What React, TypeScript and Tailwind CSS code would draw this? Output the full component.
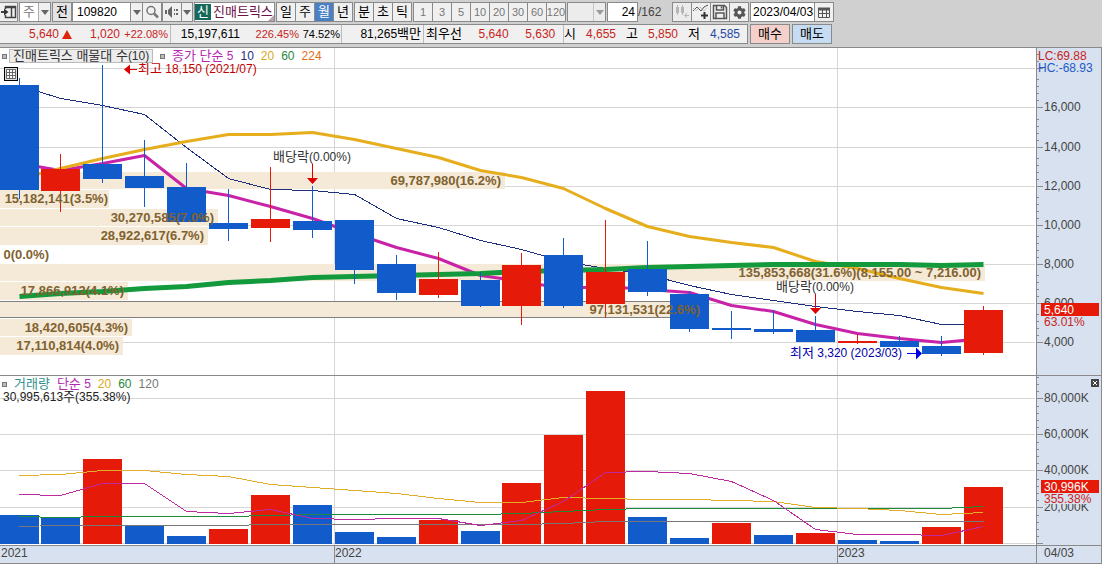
import { FaCog, FaSearch } from "react-icons/fa";

const UP = "#e61a09";
const DOWN = "#115bca";

// top, bottom, high, low, volume top, price up, volume up
const candles: [number, number, number, number, number, boolean, boolean][] = [
  [85, 190, 78, 199, 515, false, false],
  [169, 191, 154, 212, 517, true, false],
  [164, 179, 65, 183, 459, false, true],
  [176, 188, 140, 207, 526, false, false],
  [187, 222, 163, 222, 536, false, false],
  [223, 229, 189, 241, 529, false, true],
  [219, 228, 167, 242, 495, true, true],
  [221, 230, 186, 238, 505, false, false],
  [220, 270, 220, 284, 532, false, false],
  [264, 293, 255, 300, 537, false, false],
  [279, 295, 252, 298, 520, true, true],
  [280, 306, 272, 307, 531, false, false],
  [265, 306, 253, 325, 483, true, true],
  [255, 306, 238, 308, 435, false, true],
  [272, 304, 220, 318, 391, true, true],
  [269, 292, 241, 296, 517, false, false],
  [294, 329, 291, 332, 538, false, false],
  [328, 330, 311, 339, 523, false, true],
  [329, 332, 310, 334, 535, false, false],
  [330, 342, 316, 342, 533, false, true],
  [341, 343, 334, 344, 540, true, false],
  [341, 347, 336, 347, 541, false, false],
  [346, 354, 336, 356, 527, false, true],
  [310, 353, 306, 355, 487, true, true],
];

const barX = (i: number) => (i === 0 ? 0 : i < 12 ? 42 * i - 1 : 42 * i - 2);

const toPoints = (values: number[]) =>
  values.map((y, i) => `${barX(i) + 19.5},${y + 0.5}`).join(" ");

const ma5 = [163, 170, 163, 155, 188, 195, 206, 218, 233, 247, 258, 275, 281, 288, 286, 289, 292, 305, 311, 324, 333, 338, 342, 338];
const ma10 = [85, 98, 105, 114, 147, 178, 189, 190, 194, 218, 227, 240, 249, 261, 268, 274, 285, 294, 300, 306, 311, 315, 324, 324];
const ma20 = [178, 168, 158, 149, 141, 134, 134, 132, 139, 148, 157, 170, 177, 188, 208, 226, 236, 242, 247, 261, 268, 278, 287, 293];
const ma60 = [296, 293, 291, 288, 286, 282, 280, 277, 276, 275, 274, 273, 271, 270, 269, 267, 266, 265, 264, 264, 264, 264, 265, 264];

const vol5 = [494, 495, 483, 483, 511, 513, 509, 518, 519, 518, 518, 525, 520, 501, 472, 471, 473, 481, 500, 529, 534, 534, 535, 526];
const vol20 = [475, 474, 470, 470, 474, 476, 484, 487, 490, 493, 498, 502, 502, 497, 498, 499, 499, 500, 501, 507, 508, 510, 514, 512];
const vol60 = [516, 517, 516, 516, 516, 516, 515, 514, 514, 514, 514, 514, 513, 511, 509, 508, 508, 508, 508, 508, 508, 508, 508, 506];
const vol120 = [526, 525, 525, 525, 525, 525, 524, 524, 524, 524, 524, 524, 524, 523, 521, 521, 521, 521, 521, 521, 521, 521, 521, 521];

const bands = [
  [172, 17, 505],
  [190, 18, 109],
  [209, 17, 218],
  [227, 18, 208],
  [264, 17, 985],
  [282, 18, 128],
  [301, 17, 702],
  [319, 17, 132],
  [337, 18, 123],
];

const bandLabels: [number, number, string][] = [
  [501, 185, "69,787,980(16.2%)"],
  [108, 203, "15,182,141(3.5%)"],
  [214, 222, "30,270,585(7.0%)"],
  [204, 240, "28,922,617(6.7%)"],
  [49, 259, "0(0.0%)"],
  [981, 277, "135,853,668(31.6%)(8,155.00 ~ 7,216.00)"],
  [124, 295, "17,866,912(4.1%)"],
  [700, 314, "97,131,531(22.6%)"],
  [128, 332, "18,420,605(4.3%)"],
  [119, 350, "17,110,814(4.0%)"],
];

const priceTicks: [number, string][] = [
  [68, ""],
  [107, "16,000"],
  [147, "14,000"],
  [186, "12,000"],
  [225, "10,000"],
  [264, "8,000"],
  [303, "6,000"],
  [342, "4,000"],
];

const volumeTicks: [number, string][] = [
  [398, "80,000K"],
  [434, "60,000K"],
  [470, "40,000K"],
  [507, "20,000K"],
  [543, ""],
];

const box = "h-5 border border-[#8a8a8a] flex items-center justify-center shrink-0";

const Arrow = () => (
  <svg viewBox="0 0 8 5" className="h-[5px] w-2 fill-[#666]">
    <path d="M0 0h8L4 5z" />
  </svg>
);

const PeriodButton = ({ label, active, muted }: { label: string; active?: boolean; muted?: boolean }) => (
  <button
    className={`${box} -mr-px w-5 ${active ? "bg-[#4a80c4] text-white" : "bg-[#f0f0f0]"} ${muted ? "text-[11px] text-[#777]" : "text-[13px]"}`}
  >
    {label}
  </button>
);

const Toolbar = () => (
  <div className="flex items-center gap-px">
    <button aria-label="창 이동" className={`${box} w-[18px] border-l-0 bg-[#f0f0f0]`}>
      <svg viewBox="0 0 16 14" className="h-3.5 w-4" fill="none" stroke="#444">
        <path d="M4.500 4V1.500h10v11h-10V10M4 2.500h11M10.500 3v9" strokeWidth="1.500" />
        <path d="M0 7h3" strokeWidth="2" />
        <path d="M3 3.500L7.500 7 3 10.500z" fill="#333" stroke="none" />
      </svg>
    </button>
    <div className="relative w-8 shrink-0">
      <select
        aria-label="구분"
        className="block h-5 w-full appearance-none border border-[#8a8a8a] bg-white pl-[3px] text-[13px] leading-4 text-[#777]"
      >
        <option>주</option>
      </select>
      <span className="pointer-events-none absolute inset-y-px right-px flex w-3 items-center justify-center border-l border-[#aaa] bg-[#f0f0f0]">
        <Arrow />
      </span>
    </div>
    <button className={`${box} w-5 bg-[#e4e4e4] text-[13px]`}>전</button>
    <div className="-ml-px flex">
      <input aria-label="종목코드" defaultValue="109820" className="h-5 w-[59px] border border-[#8a8a8a] bg-white pl-1" />
      <button aria-label="종목 목록" className={`${box} -ml-px w-[13px] bg-[#f0f0f0]`}>
        <Arrow />
      </button>
      <button aria-label="검색" className={`${box} -ml-px w-5 bg-[#f0f0f0]`}>
        <svg viewBox="0 0 14 14" className="size-3.5" fill="none" stroke="#777">
          <circle cx="6" cy="5.500" r="4" strokeWidth="1.500" />
          <path d="M9 8.500l4 4" strokeWidth="2.500" />
        </svg>
      </button>
      <button aria-label="소리" className={`${box} w-5 bg-[#f0f0f0]`}>
        <svg viewBox="0 0 14 12" className="h-3 w-3.5 fill-[#666]">
          <path d="M0 4h2v4H0zM3 4l4-4v12L3 8zM9 3h1v2H9zM9 7h1v2H9zM11 3h2v2h-2zM11 7h2v2h-2z" />
        </svg>
      </button>
      <button aria-label="소리 설정" className={`${box} -ml-px w-3 bg-[#f0f0f0]`}>
        <Arrow />
      </button>
    </div>
    <div className="relative flex h-5 w-[81px] shrink-0 items-center border border-[#8a8a8a] bg-white text-[13px] text-[#6d1048]">
      <span className="flex h-4 w-4 items-center justify-center bg-[#14695c] text-white">신</span>
      <span className="ml-0.5 whitespace-nowrap">진매트릭스</span>
      <svg viewBox="0 0 6 6" className="absolute bottom-0 right-0 size-1.5 fill-[#b9a0ae]">
        <path d="M6 0v6H0z" />
      </svg>
    </div>
    <div className="flex pr-px">
      <PeriodButton label="일" />
      <PeriodButton label="주" />
      <PeriodButton label="월" active />
      <PeriodButton label="년" />
    </div>
    <div className="flex pr-px">
      <PeriodButton label="분" />
      <PeriodButton label="초" />
      <PeriodButton label="틱" />
    </div>
    <div className="flex pr-px">
      {["1", "3", "5", "10", "20", "30", "60", "120"].map((n) => (
        <PeriodButton key={n} label={n} muted />
      ))}
    </div>
    <div className="relative w-[39px] shrink-0">
      <select disabled aria-label="주기" className="block h-5 w-full appearance-none border border-[#8a8a8a] bg-[#ececec]">
        <option></option>
      </select>
      <span className="pointer-events-none absolute inset-y-px right-px flex w-3 items-center justify-center border-l border-[#aaa] opacity-60">
        <Arrow />
      </span>
    </div>
    <label className="flex w-16 shrink-0 items-center">
      <input aria-label="조회 봉수" defaultValue="24" className="h-5 w-[31px] border border-[#8a8a8a] bg-white pr-0.5 text-right" />
      <span className="text-[#444]">/162</span>
    </label>
    <div className="flex pr-px">
      <button disabled aria-label="봉 추가" className={`${box} -mr-px w-5 bg-[#ececec]`}>
        <svg viewBox="0 0 16 16" className="size-4" stroke="#b5b5b5" fill="#b5b5b5">
          <path d="M3.500 1v10M8.500 1v10" />
          <path d="M2 3h3v6H2zM7 3h3v6H7z" stroke="none" />
          <path d="M15 11.500h-4M13 9l-2.500 2.500L13 14" fill="none" />
        </svg>
      </button>
      <button aria-label="지표 추가" className={`${box} -mr-px w-5 bg-[#f0f0f0]`}>
        <svg viewBox="0 0 16 16" className="size-4" stroke="#555" fill="none">
          <path d="M0 7l4-4 4 4 3-4 4-2" />
          <path d="M0 4l3 3 4-4 4 4 3-3" stroke="#999" strokeDasharray="1 1" />
          <path d="M11.500 8v7M8 11.500h7" strokeWidth="2" stroke="#333" />
        </svg>
      </button>
      <button aria-label="저장" className={`${box} -mr-px w-5 bg-[#f0f0f0]`}>
        <svg viewBox="0 0 16 16" className="size-4" stroke="#555" strokeWidth="1.500" fill="none">
          <path d="M1.500 1.500h11l2 2v11h-13zM4.500 2v4h7V2M4 14V9h8v5M9.500 2.500v2" />
        </svg>
      </button>
      <button aria-label="설정" className={`${box} -mr-px w-5 bg-[#f0f0f0]`}>
        <FaCog size={13} color="#555" />
      </button>
    </div>
    <div className="flex">
      <input aria-label="날짜" defaultValue="2023/04/03" className="h-5 w-[65px] border border-[#8a8a8a] bg-white pl-0.5" />
      <button aria-label="달력" className={`${box} -ml-px w-5 bg-[#f0f0f0]`}>
        <svg viewBox="0 0 12 11" className="h-[11px] w-3" stroke="#555" fill="none">
          <path d="M.5 1.500h11v9H.5zM4.500 3v7M8.500 3v7M1 6.500h10" />
          <path d="M0 2h12" strokeWidth="3" />
        </svg>
      </button>
    </div>
  </div>
);

const quoteCell = "flex h-full shrink-0 items-center border-r border-[#bbb] text-right whitespace-nowrap";

const QuoteBar = () => (
  <div className="mt-0.5 flex gap-0.5">
    <div className="flex h-5 w-[748px] items-center border border-l-0 border-[#8a8a8a] bg-[#f0f0f0]">
      <div className={`${quoteCell} w-[171px] text-[#c8241c]`}>
        <span className="w-[59px]">5,640</span>
        <svg viewBox="0 0 10 9" className="ml-[3px] h-[9px] w-2.5 fill-[#e0240c]">
          <path d="M5 0l5 9H0z" />
        </svg>
        <span className="w-12">1,020</span>
        <span className="w-12 text-[11px]">+22.08%</span>
      </div>
      <div className={`${quoteCell} w-[171px]`}>
        <span className="w-[69px]">15,197,611</span>
        <span className="w-[59px] text-[11px] text-[#c8241c]">226.45%</span>
        <span className="w-[41px] text-[11px]">74.52%</span>
      </div>
      <div className={`${quoteCell} w-[82px] justify-end pr-0.5`}>
        81,265<span className="text-[13px]">백만</span>
      </div>
      <div className={`${quoteCell} w-[140px] text-[#c8241c]`}>
        <span className="ml-0.5 text-[13px] text-black">최우선</span>
        <span className="ml-auto w-12">5,640</span>
        <span className="w-12">5,630</span>
        <span className="w-2" />
      </div>
      <div className="flex flex-1 items-center text-[#c8241c]">
        <span className="w-[22px] text-[13px] text-black">시</span>
        <span className="w-10">4,655</span>
        <span className="w-[22px] text-[13px] text-black">고</span>
        <span className="w-10">5,850</span>
        <span className="w-[22px] text-[13px] text-black">저</span>
        <span className="text-[#1f4aa8]">4,585</span>
      </div>
    </div>
    <button className={`${box} w-10 bg-[#f5cfca] text-[13px]`}>매수</button>
    <button className={`${box} w-10 bg-[#c5dcf2] text-[13px]`}>매도</button>
  </div>
);

const Axis = ({ top, height, ticks, step }: { top: number; height: number; ticks: [number, string][]; step: number }) => (
  <g>
    <rect x="1036" y={top} width="66" height={height} fill="#d7e1ef" />
    <g shapeRendering="crispEdges" stroke="#8a8a8a">
      <path d={`M1036.500 ${top}v${height}M1101.500 ${top}v${height}`} />
      {ticks.map(([y]) => (
        <path
          key={y}
          d={`M1037 ${y + 0.5}h6` + [1, 2, 3, 4].map((n) => `M1037 ${Math.round(y - n * step) + 0.5}h2`).join("")}
        />
      ))}
    </g>
    <g fill="#444">
      {ticks.map(([y, label]) => (
        <text key={y} x="1044" y={y + 4}>
          {label}
        </text>
      ))}
    </g>
  </g>
);

const Grid = ({ top, height, ticks }: { top: number; height: number; ticks: [number, string][] }) => (
  <g shapeRendering="crispEdges" stroke="#d6d6d6">
    {ticks.map(([y]) => (
      <path key={y} d={`M0 ${y + 0.5}h1035`} />
    ))}
    <path d={`M334.500 ${top}v${height}M837.500 ${top}v${height}`} />
  </g>
);

const Dot = () => <span className="size-[5px] border border-[#777] bg-[#bbb]" />;

const PriceChart = () => (
  <section className="relative">
    <svg viewBox="0 48 1102 328" className="block h-auto w-full text-[12px]">
      <Grid top={48} height={327} ticks={priceTicks} />
      <g shapeRendering="crispEdges">
        {bands.map(([y, h, w]) => (
          <rect key={y} x="0" y={y} width={w} height={h} fill="#f5e9d8" />
        ))}
        <path d="M0 301.500h702M0 317.500h702" stroke="#808080" />
      </g>
      <g fill="none" strokeLinejoin="round">
        <polyline points={toPoints(ma10)} stroke="#1f2f80" shapeRendering="crispEdges" />
        <polyline points={toPoints(ma5)} stroke="#c822a8" strokeWidth="3" />
        <polyline points={toPoints(ma20)} stroke="#e6ae1c" strokeWidth="3" />
        <polyline points={toPoints(ma60)} stroke="#129a3c" strokeWidth="5" />
      </g>
      <g shapeRendering="crispEdges">
        {candles.map(([top, bottom, high, low, , up], i) => (
          <g key={i} fill={up ? UP : DOWN}>
            <rect x={barX(i)} y={top} width="39" height={bottom - top} />
            <rect x={barX(i) + 19} y={high} width="1" height={low - high} />
          </g>
        ))}
      </g>
      <g fill="#80622f" textAnchor="end" className="text-[13px] font-bold">
        {bandLabels.map(([x, y, label]) => (
          <text key={label} x={x} y={y}>
            {label}
          </text>
        ))}
      </g>
      <g stroke="#e00000" fill="#e00000">
        <path d="M137 69.500h-8M312.500 164v16M815.500 294v16" />
        <path d="M124 69.500l6-5v10zM307 178h11l-5.500 6zM810 308h11l-5.500 6z" stroke="none" />
      </g>
      <path d="M907 353.500h10" stroke="#0000e0" />
      <path d="M922 353.500l-6-6v12z" fill="#0000e0" />
      <text x="138" y="73" fill="#c00000">
        <tspan className="text-[13px]">최고</tspan> 18,150 (2021/07)
      </text>
      <text x="790" y="357" fill="#0000a8">
        <tspan className="text-[13px]">최저</tspan> 3,320 (2023/03)
      </text>
      <g fill="#333">
        <text x="273" y="161">
          <tspan className="text-[13px]">배당락</tspan>(0.00%)
        </text>
        <text x="776" y="291">
          <tspan className="text-[13px]">배당락</tspan>(0.00%)
        </text>
      </g>
      <Axis top={48} height={328} ticks={priceTicks} step={7} />
      <text x="1038" y="60" fill="#c8241c">
        LC:69.88
      </text>
      <text x="1038" y="72" fill="#1f5ac8">
        HC:-68.93
      </text>
      <rect x="1041" y="303" width="58" height="13" fill={UP} />
      <text x="1044" y="314" fill="#fff">
        5,640
      </text>
      <text x="1044" y="326" fill="#c8241c">
        63.01%
      </text>
      <path d="M0 375.500h1102" stroke="#8a8a8a" shapeRendering="crispEdges" />
    </svg>
    <div className="absolute left-0.5 top-px flex h-3.5 items-center gap-[7px] whitespace-nowrap">
      <div className="flex items-center gap-0.5">
        <Dot />
        <button className="flex h-3.5 w-36 items-center border border-[#bbb] bg-[#ececec] pl-[3px] text-[#333]">
          <span className="text-[13px]">진매트릭스 매물대 수</span>(10)
        </button>
      </div>
      <Dot />
      <span className="text-[#b428b4]">
        <span className="text-[13px]">종가 단순</span> 5
      </span>
      <span className="text-[#1f2f80]">10</span>
      <span className="text-[#d8a820]">20</span>
      <span className="text-[#1f8a3c]">60</span>
      <span className="text-[#e07020]">224</span>
    </div>
    <button aria-label="표 보기" className="absolute left-1 top-[19px] size-3.5 border border-black bg-[#ddd]">
      <svg viewBox="0 0 12 12" className="size-3" stroke="#666" fill="#fff">
        <path d="M1.500 1.500h9v9h-9zM4.500 2v8M7.500 2v8M2 4.500h8M2 7.500h8" />
      </svg>
    </button>
  </section>
);

const VolumeChart = () => (
  <section className="relative">
    <svg viewBox="0 376 1102 170" className="block h-auto w-full text-[12px]">
      <Grid top={376} height={169} ticks={volumeTicks} />
      <g shapeRendering="crispEdges">
        {candles.map(([, , , , top, , up], i) => (
          <rect key={i} x={barX(i)} y={top} width="39" height={544 - top} fill={up ? UP : DOWN} />
        ))}
      </g>
      <g fill="none" shapeRendering="crispEdges">
        <polyline points={toPoints(vol120)} stroke="#777" />
        <polyline points={toPoints(vol60)} stroke="#1f8a3c" />
        <polyline points={toPoints(vol20)} stroke="#e0ae28" />
        <polyline points={toPoints(vol5)} stroke="#c028a0" />
      </g>
      <Axis top={376} height={170} ticks={volumeTicks} step={7} />
      <rect x="1041" y="480" width="58" height="13" fill={UP} />
      <rect x="1044" y="493" width="55" height="11" fill="#d7e1ef" />
      <text x="1044" y="491" fill="#fff">
        30,996K
      </text>
      <text x="1044" y="503" fill="#c8241c">
        355.38%
      </text>
      <path d="M0 545.500h1102" stroke="#8a8a8a" shapeRendering="crispEdges" />
    </svg>
    <div className="absolute left-0.5 top-0.5 text-[#222]">
      <div className="flex h-3 items-center gap-[7px]">
        <Dot />
        <span className="text-[13px] text-[#2f8f8f]">거래량</span>
        <span className="text-[#b428b4]">
          <span className="text-[13px]">단순</span> 5
        </span>
        <span className="text-[#d8a820]">20</span>
        <span className="text-[#1f8a3c]">60</span>
        <span className="text-[#777]">120</span>
      </div>
      <div className="h-3.5 pl-px">
        30,995,613<span className="text-[13px]">주</span>(355.38%)
      </div>
    </div>
    <button aria-label="닫기" className="absolute right-[3px] top-[3px] size-2 bg-[#444]">
      <svg viewBox="0 0 8 8" className="size-2" stroke="#fff">
        <path d="M2 2l4 4M6 2L2 6" />
      </svg>
    </button>
  </section>
);

const App = () => {
  return (
    <main className="overflow-hidden bg-white font-['Liberation_Sans','Noto_Sans_CJK_KR',sans-serif] text-[12px] leading-[14px] text-black">
      <header className="border-b border-[#8a8a8a] bg-[#d0d0d0] pb-[3px] pt-0.5">
        <Toolbar />
        <QuoteBar />
      </header>
      <PriceChart />
      <VolumeChart />
      <footer className="grid h-[18px] grid-cols-[334fr_503fr_199fr_66fr] items-stretch border-b border-[#8a8a8a] bg-[#d7e1ef] text-[#444]">
        <span className="pl-px">2021</span>
        <span className="border-l border-[#8a8a8a]">2022</span>
        <span className="border-l border-[#8a8a8a]">2023</span>
        <span className="border-x border-[#8a8a8a] pl-[7px]">04/03</span>
      </footer>
    </main>
  );
};

export default App;
